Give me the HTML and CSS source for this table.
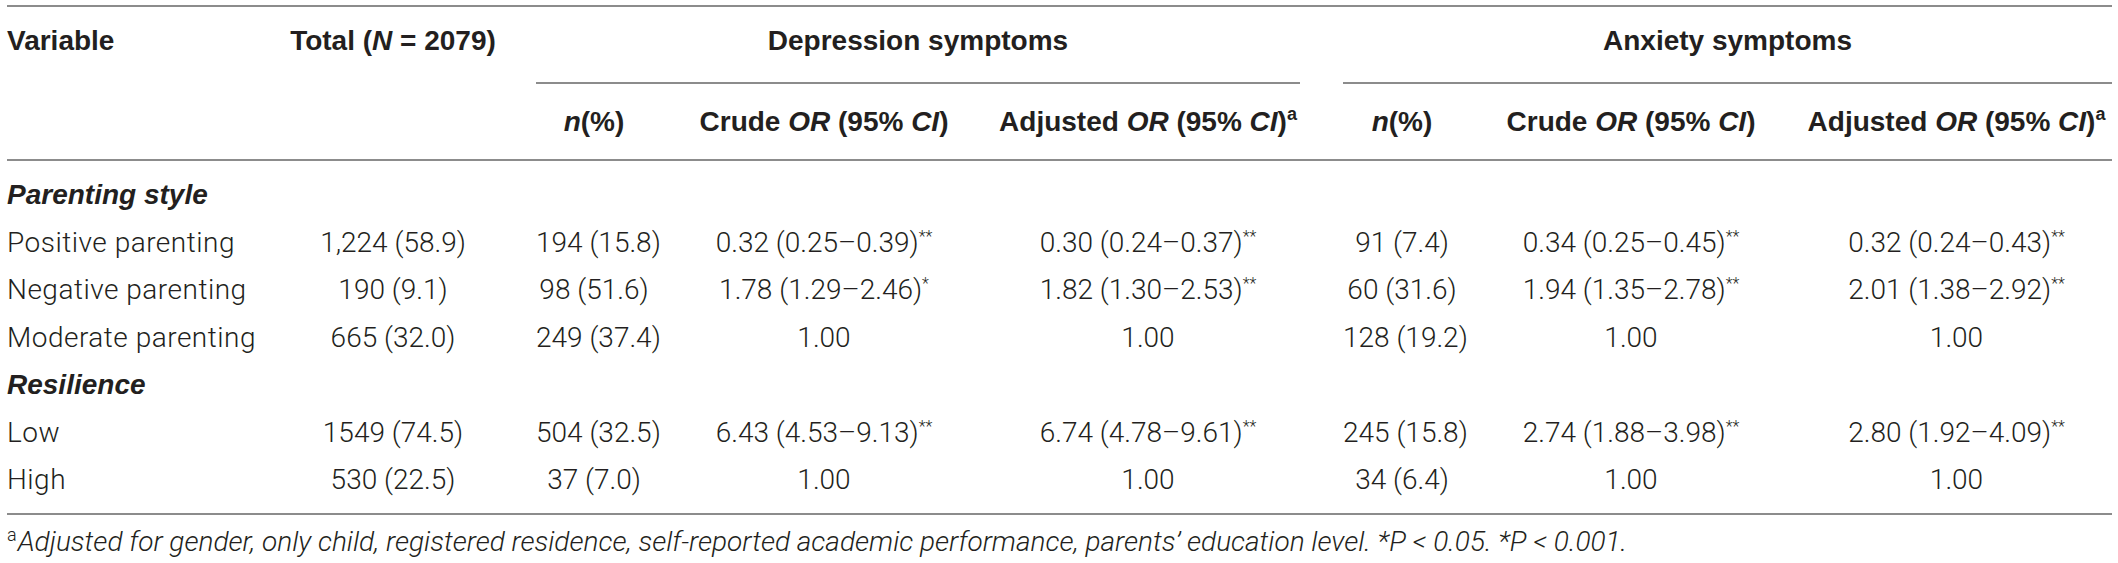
FILE: index.html
```
<!DOCTYPE html>
<html lang="en">
<head>
<meta charset="utf-8">
<title>Table</title>
<link rel="stylesheet" href="styles.css">
</head>
<body>
<div class="page">
  <table class="data">
    <colgroup>
      <col class="c-var">
      <col class="c-total">
      <col class="c-n1">
      <col class="c-crude1">
      <col class="c-adj1">
      <col class="c-n2">
      <col class="c-crude2">
      <col class="c-adj2">
    </colgroup>
    <thead>
      <tr class="head-top">
        <th rowspan="2" class="h-var">Variable</th>
        <th rowspan="2" class="h-total">Total (<i>N</i> = 2079)</th>
        <th colspan="3" class="h-group"><div class="group-rule">Depression symptoms</div></th>
        <th colspan="3" class="h-group"><div class="group-rule group-rule-gap">Anxiety symptoms</div></th>
      </tr>
      <tr class="head-sub">
        <th><i>n</i>(%)</th>
        <th>Crude <i>OR</i> (95% <i>CI</i>)</th>
        <th>Adjusted <i>OR</i> (95% <i>CI</i>)<sup class="fn">a</sup></th>
        <th class="gap"><i>n</i>(%)</th>
        <th>Crude <i>OR</i> (95% <i>CI</i>)</th>
        <th>Adjusted <i>OR</i> (95% <i>CI</i>)<sup class="fn">a</sup></th>
      </tr>
    </thead>
    <tbody>
      <tr class="section first">
        <td colspan="8">Parenting style</td>
      </tr>
      <tr>
        <td class="label">Positive parenting</td>
        <td>1,224 (58.9)</td>
        <td>194 (15.8)</td>
        <td>0.32 (0.25–0.39)<sup class="st">**</sup></td>
        <td>0.30 (0.24–0.37)<sup class="st">**</sup></td>
        <td class="gap">91 (7.4)</td>
        <td>0.34 (0.25–0.45)<sup class="st">**</sup></td>
        <td>0.32 (0.24–0.43)<sup class="st">**</sup></td>
      </tr>
      <tr>
        <td class="label">Negative parenting</td>
        <td>190 (9.1)</td>
        <td>98 (51.6)</td>
        <td>1.78 (1.29–2.46)<sup class="st">*</sup></td>
        <td>1.82 (1.30–2.53)<sup class="st">**</sup></td>
        <td class="gap">60 (31.6)</td>
        <td>1.94 (1.35–2.78)<sup class="st">**</sup></td>
        <td>2.01 (1.38–2.92)<sup class="st">**</sup></td>
      </tr>
      <tr>
        <td class="label">Moderate parenting</td>
        <td>665 (32.0)</td>
        <td>249 (37.4)</td>
        <td>1.00</td>
        <td>1.00</td>
        <td class="gap">128 (19.2)</td>
        <td>1.00</td>
        <td>1.00</td>
      </tr>
      <tr class="section">
        <td colspan="8">Resilience</td>
      </tr>
      <tr>
        <td class="label">Low</td>
        <td>1549 (74.5)</td>
        <td>504 (32.5)</td>
        <td>6.43 (4.53–9.13)<sup class="st">**</sup></td>
        <td>6.74 (4.78–9.61)<sup class="st">**</sup></td>
        <td class="gap">245 (15.8)</td>
        <td>2.74 (1.88–3.98)<sup class="st">**</sup></td>
        <td>2.80 (1.92–4.09)<sup class="st">**</sup></td>
      </tr>
      <tr class="last">
        <td class="label">High</td>
        <td>530 (22.5)</td>
        <td>37 (7.0)</td>
        <td>1.00</td>
        <td>1.00</td>
        <td class="gap">34 (6.4)</td>
        <td>1.00</td>
        <td>1.00</td>
      </tr>
    </tbody>
  </table>
  <p class="footnote"><sup class="fn-note">a</sup><i>Adjusted for gender, only child, registered residence, self-reported academic performance, parents’ education level. *P &lt; 0.05. *P &lt; 0.001.</i></p>
</div>
</body>
</html>
```

FILE: styles.css
```
html, body {
  margin: 0;
  padding: 0;
  background: #ffffff;
}

.page {
  padding: 5px 6px 0 7px;
  color: #231f20;
  font-family: "Roboto", "Liberation Sans", Arial, sans-serif;
  font-weight: 300;
  font-size: 28px;
  line-height: 34px;
}

.data {
  width: 2105px;
  table-layout: fixed;
  border-collapse: collapse;
  border-top: 2px solid #8c8c8c;
  border-bottom: 2px solid #8c8c8c;
}

.data thead {
  border-bottom: 2px solid #8c8c8c;
}

.c-var { width: 243px; }
.c-total { width: 286px; }
.c-n1 { width: 116px; }
.c-crude1 { width: 344px; }
.c-adj1 { width: 304px; }
.c-n2 { width: 161px; }
.c-crude2 { width: 340px; }
.c-adj2 { width: 311px; }

.data th {
  font-family: "Liberation Sans", Arial, sans-serif;
  font-weight: 700;
  text-align: center;
  padding: 0;
  white-space: nowrap;
}

.data th i {
  font-style: italic;
}

.data .head-top th {
  vertical-align: top;
}

.data .h-var {
  text-align: left;
  padding-top: 17px;
}

.data .h-total {
  padding-top: 17px;
}

.group-rule {
  padding: 17px 0 24px;
  border-bottom: 2px solid #8c8c8c;
}

.group-rule-gap {
  margin-left: 43px;
}

.data .head-sub th {
  padding: 21px 0 20px;
}

.data .head-sub th.gap,
.data td.gap {
  padding-left: 43px;
}

.data td {
  text-align: center;
  padding: 6.75px 0;
  white-space: nowrap;
}

.data td.label {
  text-align: left;
  letter-spacing: 0.5px;
}

.section td {
  text-align: left;
  font-family: "Liberation Sans", Arial, sans-serif;
  font-weight: 700;
  font-style: italic;
}

.data tr.first td {
  padding-top: 17px;
}

.data tr.last td {
  padding-bottom: 16px;
}

.fn {
  font-size: 18px;
  line-height: 0;
  vertical-align: 11px;
}

.st {
  font-size: 16px;
  line-height: 0;
  vertical-align: 10px;
}

.footnote {
  margin: 10px 0 0;
  white-space: nowrap;
}

.fn-note {
  font-size: 18px;
  line-height: 0;
  vertical-align: 10px;
  font-style: normal;
  margin-right: 1px;
}
```
